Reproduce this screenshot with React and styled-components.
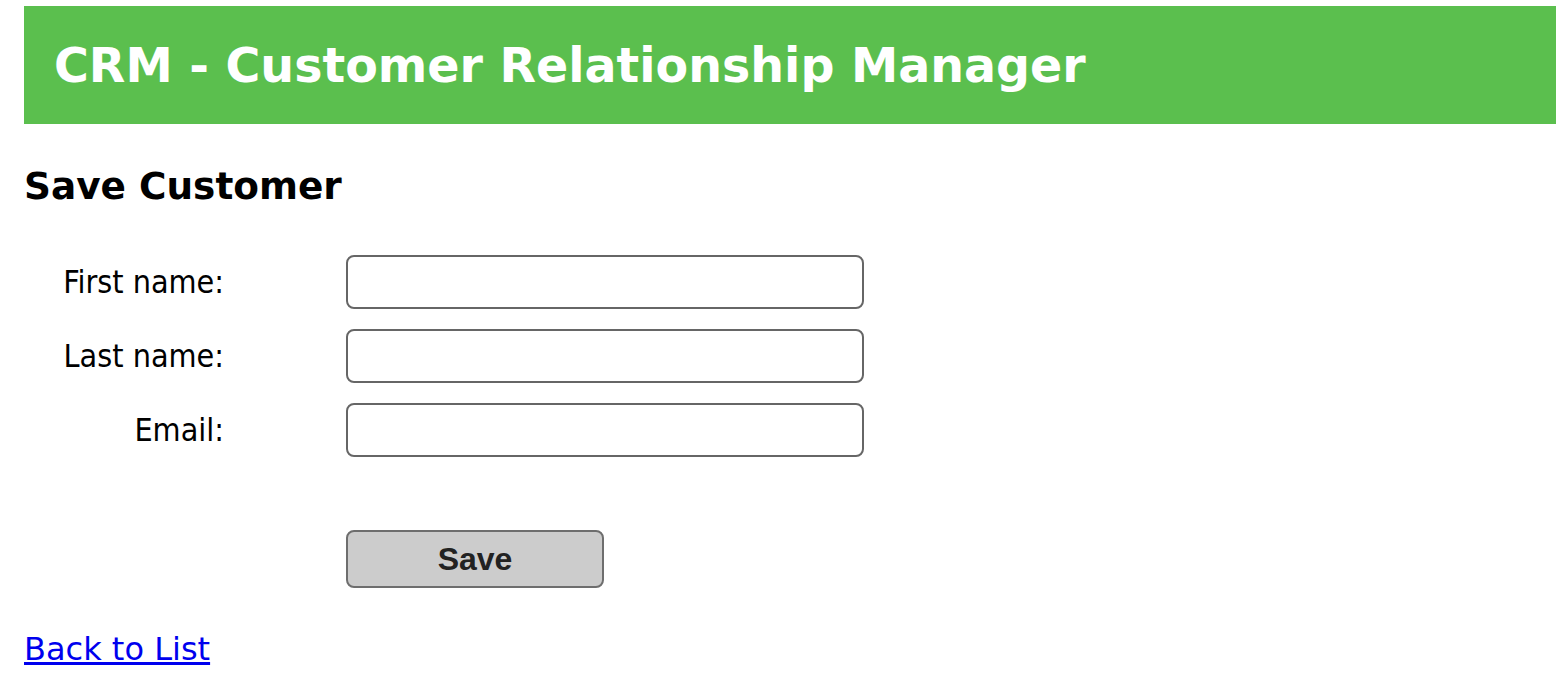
import { Fragment } from 'react';
import styled, { createGlobalStyle } from 'styled-components';

const GlobalStyle = createGlobalStyle`
  body {
    margin: 0;
    background: #ffffff;
    font-family: "DejaVu Sans", Verdana, sans-serif;
    font-size: 32px;
  }
`;

const StPage = styled.div`
  padding: 6px 12px 0 24px;
`;

const StHeader = styled.header`
  display: flex;
  align-items: center;
  height: 118px;
  padding-left: 30px;
  background-color: #5bbf4e;
`;

const StTitle = styled.h1`
  margin: 0;
  font-size: 47.5px;
  font-weight: bold;
  color: #ffffff;
`;

const StSubTitle = styled.h3`
  margin: 40px 0 0;
  font-size: 37.44px;
  font-weight: bold;
  color: #000000;
`;

const StForm = styled.form`
  display: grid;
  grid-template-columns: 200px 518px;
  grid-template-rows: repeat(3, 54px) auto;
  column-gap: 122px;
  row-gap: 20px;
  margin-top: 47px;
`;

const StLabel = styled.label`
  align-self: center;
  text-align: right;
  font-family: "DejaVu Sans Condensed", "DejaVu Sans", Tahoma, sans-serif;
  font-stretch: condensed;
  font-size: 32px;
  color: #000000;
`;

const StInput = styled.input`
  box-sizing: border-box;
  width: 518px;
  height: 54px;
  border: 2px solid #666666;
  border-radius: 8px;
  background: #ffffff;
  outline: none;
`;

const StButton = styled.button`
  grid-column: 2;
  margin-top: 53px;
  box-sizing: border-box;
  width: 258px;
  height: 58px;
  border: 2px solid #6e6e6e;
  border-radius: 8px;
  background-color: #cccccc;
  color: #222222;
  font-family: "Liberation Sans", Arial, sans-serif;
  font-size: 32px;
  font-weight: bold;
  cursor: pointer;
`;

const StLink = styled.a`
  display: inline-block;
  margin-top: 42px;
  font-size: 32px;
  color: #0000ee;
  text-decoration: underline;
`;

const fields = [
  { id: 'firstName', label: 'First name:' },
  { id: 'lastName', label: 'Last name:' },
  { id: 'email', label: 'Email:' },
];

function App() {
  return (
    <>
      <GlobalStyle />
      <StPage>
        <StHeader>
          <StTitle>CRM - Customer Relationship Manager</StTitle>
        </StHeader>
        <StSubTitle>Save Customer</StSubTitle>
        <StForm onSubmit={(e) => e.preventDefault()}>
          {fields.map((field) => (
            <Fragment key={field.id}>
              <StLabel htmlFor={field.id}>{field.label}</StLabel>
              <StInput id={field.id} type="text" />
            </Fragment>
          ))}
          <StButton type="submit">Save</StButton>
        </StForm>
        <div>
          <StLink href="#">Back to List</StLink>
        </div>
      </StPage>
    </>
  );
}

export default App;
